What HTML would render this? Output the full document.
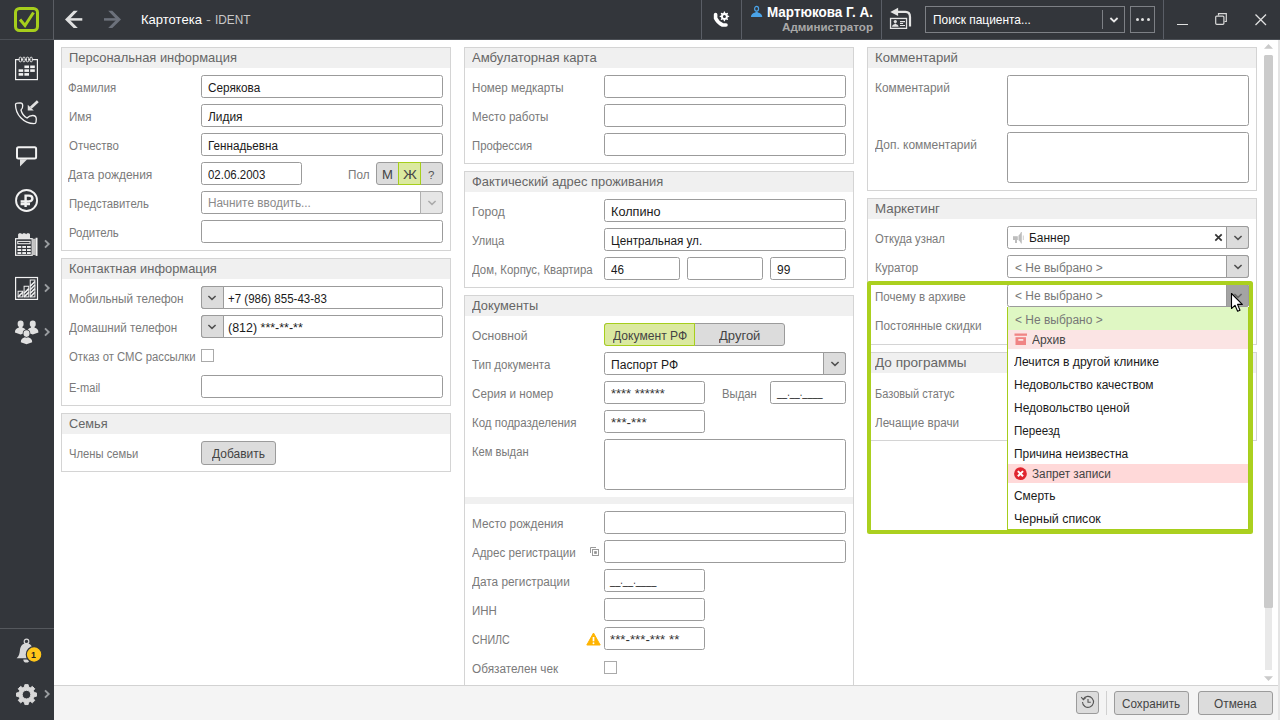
<!DOCTYPE html>
<html lang="ru"><head><meta charset="utf-8"><title>Картотека - IDENT</title>
<style>
html,body{margin:0;padding:0;}
body{width:1280px;height:720px;overflow:hidden;position:relative;background:#fff;font-family:'Liberation Sans',sans-serif;}
span{white-space:nowrap;display:block;}
svg{display:block;overflow:visible;}
</style></head>
<body>
<div style='position:absolute;left:0px;top:0px;width:1280px;height:40px;box-sizing:border-box;background:#33363b;'></div>
<div style='position:absolute;left:0px;top:40px;width:54px;height:680px;box-sizing:border-box;background:#33363b;'></div>
<div style='position:absolute;left:0px;top:39px;width:1280px;height:1px;box-sizing:border-box;background:#4b4f55;'></div>
<div style='position:absolute;left:53px;top:0px;width:1px;height:40px;box-sizing:border-box;background:#5a5d63;'></div>
<div style='position:absolute;left:701px;top:0px;width:1px;height:39px;box-sizing:border-box;background:#5a5e66;'></div>
<div style='position:absolute;left:741px;top:0px;width:1px;height:39px;box-sizing:border-box;background:#5a5e66;'></div>
<div style='position:absolute;left:881px;top:0px;width:1px;height:39px;box-sizing:border-box;background:#5a5e66;'></div>
<div style='position:absolute;left:1163px;top:0px;width:1px;height:39px;box-sizing:border-box;background:#5a5e66;'></div>
<div style='position:absolute;left:0px;top:628px;width:54px;height:1px;box-sizing:border-box;background:#55585d;'></div>
<svg style='position:absolute;left:12px;top:5px' width='30' height='30' viewBox='0 0 30 30'><rect x='3.5' y='3.5' width='22' height='22' rx='4' fill='none' stroke='#a6ce1c' stroke-width='3'/><path d='M8 14.5L13 20.5L21.5 7.5' fill='none' stroke='#a6ce1c' stroke-width='3'/></svg>
<svg style='position:absolute;left:63px;top:8px' width='22' height='22' viewBox='0 0 22 22'><path d='M10.700 2.700H14.800L6.400 11.400L14.800 20.100H10.700L2 11.400z' fill='#e0e0e0'/><path d='M5.500 11.400H19.300' stroke='#e0e0e0' stroke-width='2.500'/></svg>
<svg style='position:absolute;left:101px;top:8px' width='22' height='22' viewBox='0 0 22 22'><path d='M11.300 2.700H7.200L15.600 11.400L7.200 20.100H11.300L20 11.400z' fill='#6c717b'/><path d='M16.500 11.400H3' stroke='#6c717b' stroke-width='2.500'/></svg>
<svg style='position:absolute;left:700px;top:0px' width='40' height='40' viewBox='0 0 40 40'><path d='M15.6 14.6V18.2C17 21.2 19.6 23.6 22.6 25H26' fill='none' stroke='#fff' stroke-width='3.6' stroke-linecap='round' stroke-linejoin='round'/><path d='M29.18 15.95L29.18 16.85L27.78 17.32L27.44 18.13L28.10 19.46L27.46 20.10L26.13 19.44L25.32 19.78L24.85 21.18L23.95 21.18L23.48 19.78L22.67 19.44L21.34 20.10L20.70 19.46L21.36 18.13L21.02 17.32L19.62 16.85L19.62 15.95L21.02 15.48L21.36 14.67L20.70 13.34L21.34 12.70L22.67 13.36L23.48 13.02L23.95 11.62L24.85 11.62L25.32 13.02L26.13 13.36L27.46 12.70L28.10 13.34L27.44 14.67L27.78 15.48ZM25.9 16.4a1.5 1.5 0 1 0 -3.0 0a1.5 1.5 0 1 0 3.0 0Z' fill='#fff' fill-rule='evenodd'/></svg>
<svg style='position:absolute;left:750px;top:4px' width='14' height='14' viewBox='0 0 14 14'><ellipse cx='6.600' cy='4.750' rx='2' ry='2.350' fill='none' stroke='#4aa3e8' stroke-width='1.200'/><path d='M.9 13c.1-2.600 2-4.300 4.400-4.600l.6-1h1.400l.6 1c2.400.3 4.300 2 4.400 4.600z' fill='#4aa3e8'/></svg>
<svg style='position:absolute;left:880px;top:0px' width='40' height='40' viewBox='0 0 40 40'><path d='M10.300 11.900L18.100 7.800V15.900z' fill='#e4e4e4'/><path d='M18 11.900H25.500C28.500 11.900 30 14 30 17V26.500' fill='none' stroke='#e4e4e4' stroke-width='2.200'/><rect x='10.550' y='18.450' width='16' height='9.900' fill='none' stroke='#e4e4e4' stroke-width='1.300'/><circle cx='15.300' cy='21.500' r='1.600' fill='#e4e4e4'/><path d='M12 26.800c.2-1.500 1.200-2.300 2.500-2.500l.3-.8h1l.3.800c1.300.2 2.300 1 2.500 2.500z' fill='#e4e4e4'/><path d='M20 21.600H25M20 23.500H23.100M20 25.500H25' stroke='#e4e4e4' stroke-width='1.100'/></svg>
<div style='position:absolute;left:925px;top:6px;width:200px;height:27px;box-sizing:border-box;border:1px solid #7d8085;'></div>
<div style='position:absolute;left:1102px;top:10px;width:1px;height:19px;box-sizing:border-box;background:#7d8085;'></div>
<svg style='position:absolute;left:1108.5px;top:15.5px' width='10' height='8' viewBox='0 0 10 8'><path d='M1.4 2.0L5 5.4L8.6 2.0' fill='none' stroke='#e8e8e8' stroke-width='1.8'/></svg>
<div style='position:absolute;left:1130px;top:6px;width:25px;height:27px;box-sizing:border-box;border:1px solid #7d8085;'></div>
<div style='position:absolute;left:1135.5px;top:18px;width:3px;height:3px;box-sizing:border-box;background:#e0e0e0;border-radius:50%;'></div>
<div style='position:absolute;left:1141.0px;top:18px;width:3px;height:3px;box-sizing:border-box;background:#e0e0e0;border-radius:50%;'></div>
<div style='position:absolute;left:1146.5px;top:18px;width:3px;height:3px;box-sizing:border-box;background:#e0e0e0;border-radius:50%;'></div>
<div style='position:absolute;left:1177px;top:24px;width:11px;height:1.3px;box-sizing:border-box;background:#e0e0e0;'></div>
<svg style='position:absolute;left:1214px;top:12px' width='14' height='14' viewBox='0 0 14 14'><path d='M4.500 3.500V1.700H12.300V9.500H10.500' fill='none' stroke='#d8d8d8' stroke-width='1.2'/><rect x='1.700' y='4.100' width='8.200' height='8.200' rx='1' fill='none' stroke='#d8d8d8' stroke-width='1.2'/></svg>
<svg style='position:absolute;left:1254px;top:13px' width='14' height='14' viewBox='0 0 14 14'><path d='M1.500 1.500L12 12M12 1.500L1.500 12' fill='none' stroke='#e0e0e0' stroke-width='1.300'/></svg>
<svg style='position:absolute;left:14px;top:56px' width='26' height='26' viewBox='0 0 26 26'><rect x='1.600' y='3.600' width='21.800' height='20' fill='none' stroke='#f2f2f2' stroke-width='1.2'/><rect x='5.2' y='1.200' width='2.300' height='4.600' rx='1' fill='#33363b' stroke='#f2f2f2' stroke-width='0.9'/><rect x='8.8' y='1.200' width='2.300' height='4.600' rx='1' fill='#33363b' stroke='#f2f2f2' stroke-width='0.9'/><rect x='12.4' y='1.200' width='2.300' height='4.600' rx='1' fill='#33363b' stroke='#f2f2f2' stroke-width='0.9'/><rect x='16.0' y='1.200' width='2.300' height='4.600' rx='1' fill='#33363b' stroke='#f2f2f2' stroke-width='0.9'/><rect x='10.4' y='9.5' width='4.600' height='2.600' fill='#f2f2f2'/><rect x='16.2' y='9.5' width='4.600' height='2.600' fill='#f2f2f2'/><rect x='4.6' y='13.3' width='4.600' height='2.600' fill='#f2f2f2'/><rect x='10.4' y='13.3' width='4.600' height='2.600' fill='#f2f2f2'/><rect x='16.2' y='13.3' width='4.600' height='2.600' fill='#f2f2f2'/><rect x='4.6' y='17.1' width='4.600' height='2.600' fill='#f2f2f2'/><rect x='10.4' y='17.1' width='4.600' height='2.600' fill='#f2f2f2'/></svg>
<svg style='position:absolute;left:14px;top:100px' width='26' height='26' viewBox='0 0 26 26'><path d='M1.500 4.400C1.500 3.500 2.300 3.200 3.500 3.100L6.400 2.900C7.800 2.900 8.600 3.800 8.700 5.500C8.800 7.500 8.300 9 7 10C8 14 10.500 16.800 13 18C14.500 16.500 16.500 15.500 18.800 15.500C20.600 15.500 22.200 17 22.300 19L22 22.300C21.900 23.300 21.200 23.600 20 23.600C9.500 23.500 1.500 14.500 1.500 4.400Z' fill='none' stroke='#f2f2f2' stroke-width='1.300' stroke-linejoin='round'/><path d='M13.750 10.600V4.750L19.750 10.600z' fill='#e0e0e0'/><path d='M16.800 7.700L23.800 1.200' stroke='#e0e0e0' stroke-width='2.700'/></svg>
<svg style='position:absolute;left:14px;top:144px' width='26' height='26' viewBox='0 0 26 26'><rect x='3' y='3.250' width='19.100' height='11.200' rx='1.500' fill='none' stroke='#f2f2f2' stroke-width='2'/><path d='M6 15.200H13.250L6 22.500z' fill='#e0e0e0'/></svg>
<svg style='position:absolute;left:14px;top:188px' width='26' height='26' viewBox='0 0 26 26'><circle cx='12.550' cy='12.450' r='10.500' fill='none' stroke='#f2f2f2' stroke-width='1.900'/><path d='M11.600 19V7.600H15c2.400 0 3.400 1.400 3.400 2.900s-1 2.900-3.400 2.900H6.600M6.600 16H16' fill='none' stroke='#f2f2f2' stroke-width='2.400'/></svg>
<svg style='position:absolute;left:14px;top:232px' width='26' height='26' viewBox='0 0 26 26'><path d='M4.100 6.500V2.300l1-1.100h2l1 1.100 1-1.100h2l1 1.100 1-1.100h2l.9 1.100V6.500z' fill='#e4e4e4'/><rect x='1.600' y='6.700' width='16.600' height='16.600' fill='none' stroke='#f2f2f2' stroke-width='1.200'/><rect x='3.750' y='9.400' width='12.350' height='2.300' fill='none' stroke='#f2f2f2' stroke-width='1'/><rect x='3.5' y='14' width='3.750' height='1.900' fill='#f2f2f2'/><rect x='3.5' y='17.1' width='3.750' height='1.900' fill='#f2f2f2'/><rect x='3.5' y='20.1' width='3.750' height='1.900' fill='#f2f2f2'/><rect x='8.25' y='14' width='3.750' height='1.900' fill='#f2f2f2'/><rect x='8.25' y='17.1' width='3.750' height='1.900' fill='#f2f2f2'/><rect x='8.25' y='20.1' width='3.750' height='1.900' fill='#f2f2f2'/><rect x='13' y='14' width='3.750' height='1.900' fill='#f2f2f2'/><rect x='13' y='17.1' width='3.750' height='1.900' fill='#f2f2f2'/><rect x='13' y='20.1' width='3.750' height='1.900' fill='#f2f2f2'/><rect x='18.750' y='6.750' width='2.900' height='16.300' fill='#c2c2c2'/><rect x='21.600' y='5.750' width='1.900' height='18.150' fill='#f2f2f2'/></svg>
<svg style='position:absolute;left:14px;top:276px' width='26' height='26' viewBox='0 0 26 26'><rect x='1.600' y='1.500' width='21.900' height='21.900' fill='none' stroke='#f2f2f2' stroke-width='1.200'/><rect x='4.1' y='15.25' width='4.65' height='5.649999999999999' fill='none' stroke='#f2f2f2' stroke-width='1'/><path d='M4.1 20.9L8.75 16.25' stroke='#f2f2f2' stroke-width='1.500'/><rect x='10.1' y='10.25' width='4.65' height='10.649999999999999' fill='none' stroke='#f2f2f2' stroke-width='1'/><path d='M10.1 20.9L14.75 16.25M10.1 17.299999999999997L14.75 12.649999999999997' stroke='#f2f2f2' stroke-width='1.500'/><rect x='16.25' y='4' width='4.65' height='16.9' fill='none' stroke='#f2f2f2' stroke-width='1'/><path d='M16.25 20.9L20.9 16.25M16.25 17.299999999999997L20.9 12.649999999999997M16.25 13.699999999999998L20.9 9.049999999999997M16.25 10.099999999999998L20.9 5.4499999999999975' stroke='#f2f2f2' stroke-width='1.500'/></svg>
<svg style='position:absolute;left:13px;top:319px' width='28' height='28' viewBox='0 0 28 28'><path d='M1.8999999999999995 13.5c0-2.800 1.600-4.300 3.700-4.700l.6-1.200h2.800l.6 1.200c2.100.4 3.700 1.900 3.700 4.700l-5.700 2z' fill='#e0e0e0'/><ellipse cx='7.6' cy='4.9' rx='3.0' ry='3.3' fill='#e0e0e0'/><path d='M14.05 13.5c0-2.800 1.600-4.300 3.700-4.700l.6-1.200h2.800l.6 1.200c2.100.4 3.700 1.900 3.700 4.700l-5.700 2z' fill='#e0e0e0'/><ellipse cx='19.75' cy='4.9' rx='3.0' ry='3.3' fill='#e0e0e0'/><path d='M7.8 23.2c0-2.800 1.600-4.300 3.700-4.700l.6-1.200h2.800l.6 1.200c2.100.4 3.700 1.900 3.700 4.700l-5.700 2z' fill='#e0e0e0' stroke='#33363b' stroke-width='1.600' paint-order='stroke'/><ellipse cx='13.5' cy='14.6' rx='3.0' ry='3.3' fill='#e0e0e0' stroke='#33363b' stroke-width='1.600' paint-order='stroke'/></svg>
<svg style='position:absolute;left:14px;top:636px' width='30' height='28' viewBox='0 0 30 28'><circle cx='12.500' cy='5.400' r='2.300' fill='none' stroke='#d8d8d8' stroke-width='1.200'/><path d='M2.600 22.200c2.700-2.200 3-4.800 3.400-8.400.4-3.700 2.900-6.500 6.400-6.500s6 2.800 6.400 6.500c.4 3.600.7 6.200 3.400 8.400z' fill='#d8d8d8'/><path d='M9.300 23.500a3.100 3.100 0 0 0 6.200 0z' fill='#d8d8d8'/><circle cx='20.100' cy='18.500' r='7.800' fill='#ffc61a' stroke='#33363b' stroke-width='1.200'/></svg>
<svg style='position:absolute;left:14px;top:682px' width='26' height='26' viewBox='0 0 26 26'><path d='M22.46 10.94L22.46 14.26L20.14 14.62L19.33 16.57L20.72 18.47L18.37 20.82L16.47 19.43L14.52 20.24L14.16 22.56L10.84 22.56L10.48 20.24L8.53 19.43L6.63 20.82L4.28 18.47L5.67 16.57L4.86 14.62L2.54 14.26L2.54 10.94L4.86 10.58L5.67 8.63L4.28 6.73L6.63 4.38L8.53 5.77L10.48 4.96L10.84 2.64L14.16 2.64L14.52 4.96L16.47 5.77L18.37 4.38L20.72 6.73L19.33 8.63L20.14 10.58ZM16.8 12.6a4.3 4.3 0 1 0 -8.6 0a4.3 4.3 0 1 0 8.6 0Z' fill='#d8d8d8' fill-rule='evenodd' stroke='#d8d8d8' stroke-width='1' stroke-linejoin='round'/></svg>
<svg style='position:absolute;left:43px;top:239px' width='8' height='10' viewBox='0 0 8 10'><path d='M2 1.300L5.700 5L2 8.700' fill='none' stroke='#9a9da0' stroke-width='1.900'/></svg>
<svg style='position:absolute;left:43px;top:283px' width='8' height='10' viewBox='0 0 8 10'><path d='M2 1.300L5.700 5L2 8.700' fill='none' stroke='#9a9da0' stroke-width='1.900'/></svg>
<svg style='position:absolute;left:43px;top:327px' width='8' height='10' viewBox='0 0 8 10'><path d='M2 1.300L5.700 5L2 8.700' fill='none' stroke='#9a9da0' stroke-width='1.900'/></svg>
<svg style='position:absolute;left:43px;top:689px' width='8' height='10' viewBox='0 0 8 10'><path d='M2 1.300L5.700 5L2 8.700' fill='none' stroke='#9a9da0' stroke-width='1.900'/></svg>
<div style='position:absolute;left:54px;top:40px;width:1226px;height:645px;box-sizing:border-box;background:#fff;'></div>
<div style='position:absolute;left:61px;top:47px;width:390px;height:204px;box-sizing:border-box;border:1px solid #d4d4d4;background:#fff;'></div>
<div style='position:absolute;left:62px;top:48px;width:388px;height:20px;box-sizing:border-box;background:#f0f0f0;'></div>
<div style='position:absolute;left:201px;top:75px;width:242px;height:23px;box-sizing:border-box;border:1px solid #9b9b9b;border-radius:2.5px;background:#fff;'></div>
<div style='position:absolute;left:201px;top:104px;width:242px;height:23px;box-sizing:border-box;border:1px solid #9b9b9b;border-radius:2.5px;background:#fff;'></div>
<div style='position:absolute;left:201px;top:133px;width:242px;height:23px;box-sizing:border-box;border:1px solid #9b9b9b;border-radius:2.5px;background:#fff;'></div>
<div style='position:absolute;left:201px;top:162px;width:101px;height:23px;box-sizing:border-box;border:1px solid #9b9b9b;border-radius:2.5px;background:#fff;'></div>
<div style='position:absolute;left:376px;top:162px;width:67px;height:23px;box-sizing:border-box;border:1px solid #9b9b9b;border-radius:3px;background:#dcdcdc;'></div>
<div style='position:absolute;left:398px;top:162px;width:23px;height:23px;box-sizing:border-box;border:1px solid #a6ce1c;background:#dbe9a0;'></div>
<div style='position:absolute;left:201px;top:191px;width:242px;height:23px;box-sizing:border-box;border:1px solid #9b9b9b;border-radius:2.5px;background:#fff;'></div>
<div style='position:absolute;left:420px;top:191px;width:23px;height:23px;box-sizing:border-box;border:1px solid #b0b0b0;border-radius:0 3px 3px 0;background:#e6e6e6;'></div>
<svg style='position:absolute;left:426.5px;top:198.5px' width='10' height='8' viewBox='0 0 10 8'><path d='M1.4 2.0L5 5.4L8.6 2.0' fill='none' stroke='#aaa' stroke-width='1.5'/></svg>
<div style='position:absolute;left:201px;top:220px;width:242px;height:23px;box-sizing:border-box;border:1px solid #9b9b9b;border-radius:2.5px;background:#fff;'></div>
<div style='position:absolute;left:61px;top:258px;width:390px;height:148px;box-sizing:border-box;border:1px solid #d4d4d4;background:#fff;'></div>
<div style='position:absolute;left:62px;top:259px;width:388px;height:20px;box-sizing:border-box;background:#f0f0f0;'></div>
<div style='position:absolute;left:201px;top:286px;width:242px;height:23px;box-sizing:border-box;border:1px solid #9b9b9b;border-radius:2.5px;background:#fff;'></div>
<div style='position:absolute;left:201px;top:286px;width:23px;height:23px;box-sizing:border-box;border:1px solid #9b9b9b;border-radius:3px 0 0 3px;background:#dcdcdc;'></div>
<svg style='position:absolute;left:207px;top:293.5px' width='10' height='8' viewBox='0 0 10 8'><path d='M1.4 2.0L5 5.4L8.6 2.0' fill='none' stroke='#505050' stroke-width='1.5'/></svg>
<div style='position:absolute;left:201px;top:315px;width:242px;height:23px;box-sizing:border-box;border:1px solid #9b9b9b;border-radius:2.5px;background:#fff;'></div>
<div style='position:absolute;left:201px;top:315px;width:23px;height:23px;box-sizing:border-box;border:1px solid #9b9b9b;border-radius:3px 0 0 3px;background:#dcdcdc;'></div>
<svg style='position:absolute;left:207px;top:322.5px' width='10' height='8' viewBox='0 0 10 8'><path d='M1.4 2.0L5 5.4L8.6 2.0' fill='none' stroke='#505050' stroke-width='1.5'/></svg>
<div style='position:absolute;left:201px;top:349px;width:13px;height:13px;box-sizing:border-box;border:1px solid #aaa;background:#fff;'></div>
<div style='position:absolute;left:201px;top:375px;width:242px;height:23px;box-sizing:border-box;border:1px solid #9b9b9b;border-radius:2.5px;background:#fff;'></div>
<div style='position:absolute;left:61px;top:413px;width:390px;height:59px;box-sizing:border-box;border:1px solid #d4d4d4;background:#fff;'></div>
<div style='position:absolute;left:62px;top:414px;width:388px;height:20px;box-sizing:border-box;background:#f0f0f0;'></div>
<div style='position:absolute;left:201px;top:441px;width:75px;height:24px;box-sizing:border-box;border:1px solid #9b9b9b;border-radius:3px;background:#dcdcdc;'></div>
<div style='position:absolute;left:464px;top:47px;width:390px;height:117px;box-sizing:border-box;border:1px solid #d4d4d4;background:#fff;'></div>
<div style='position:absolute;left:465px;top:48px;width:388px;height:20px;box-sizing:border-box;background:#f0f0f0;'></div>
<div style='position:absolute;left:604px;top:75px;width:242px;height:23px;box-sizing:border-box;border:1px solid #9b9b9b;border-radius:2.5px;background:#fff;'></div>
<div style='position:absolute;left:604px;top:104px;width:242px;height:23px;box-sizing:border-box;border:1px solid #9b9b9b;border-radius:2.5px;background:#fff;'></div>
<div style='position:absolute;left:604px;top:133px;width:242px;height:23px;box-sizing:border-box;border:1px solid #9b9b9b;border-radius:2.5px;background:#fff;'></div>
<div style='position:absolute;left:464px;top:171px;width:390px;height:117px;box-sizing:border-box;border:1px solid #d4d4d4;background:#fff;'></div>
<div style='position:absolute;left:465px;top:172px;width:388px;height:20px;box-sizing:border-box;background:#f0f0f0;'></div>
<div style='position:absolute;left:604px;top:199px;width:242px;height:23px;box-sizing:border-box;border:1px solid #9b9b9b;border-radius:2.5px;background:#fff;'></div>
<div style='position:absolute;left:604px;top:228px;width:242px;height:23px;box-sizing:border-box;border:1px solid #9b9b9b;border-radius:2.5px;background:#fff;'></div>
<div style='position:absolute;left:604px;top:257px;width:76px;height:23px;box-sizing:border-box;border:1px solid #9b9b9b;border-radius:2.5px;background:#fff;'></div>
<div style='position:absolute;left:687px;top:257px;width:76px;height:23px;box-sizing:border-box;border:1px solid #9b9b9b;border-radius:2.5px;background:#fff;'></div>
<div style='position:absolute;left:770px;top:257px;width:76px;height:23px;box-sizing:border-box;border:1px solid #9b9b9b;border-radius:2.5px;background:#fff;'></div>
<div style='position:absolute;left:464px;top:295px;width:390px;height:400px;box-sizing:border-box;border:1px solid #d4d4d4;background:#fff;border-bottom:none;'></div>
<div style='position:absolute;left:465px;top:296px;width:388px;height:20px;box-sizing:border-box;background:#f0f0f0;'></div>
<div style='position:absolute;left:604px;top:323px;width:181px;height:23px;box-sizing:border-box;border:1px solid #9b9b9b;border-radius:3px;background:#dcdcdc;'></div>
<div style='position:absolute;left:604px;top:323px;width:91px;height:23px;box-sizing:border-box;border:1px solid #a6ce1c;border-radius:3px 0 0 3px;background:#dbe9a0;'></div>
<div style='position:absolute;left:604px;top:352px;width:242px;height:23px;box-sizing:border-box;border:1px solid #9b9b9b;border-radius:2.5px;background:#fff;'></div>
<div style='position:absolute;left:823px;top:352px;width:23px;height:23px;box-sizing:border-box;border:1px solid #9b9b9b;border-radius:0 3px 3px 0;background:#dcdcdc;'></div>
<svg style='position:absolute;left:829.5px;top:359.5px' width='10' height='8' viewBox='0 0 10 8'><path d='M1.4 2.0L5 5.4L8.6 2.0' fill='none' stroke='#505050' stroke-width='1.5'/></svg>
<div style='position:absolute;left:604px;top:381px;width:101px;height:23px;box-sizing:border-box;border:1px solid #9b9b9b;border-radius:2.5px;background:#fff;'></div>
<div style='position:absolute;left:770px;top:381px;width:76px;height:23px;box-sizing:border-box;border:1px solid #9b9b9b;border-radius:2.5px;background:#fff;'></div>
<div style='position:absolute;left:604px;top:410px;width:101px;height:23px;box-sizing:border-box;border:1px solid #9b9b9b;border-radius:2.5px;background:#fff;'></div>
<div style='position:absolute;left:604px;top:439px;width:242px;height:51px;box-sizing:border-box;border:1px solid #9b9b9b;border-radius:2.5px;background:#fff;'></div>
<div style='position:absolute;left:465px;top:497px;width:388px;height:7px;box-sizing:border-box;background:#f0f0f0;'></div>
<div style='position:absolute;left:604px;top:511px;width:242px;height:23px;box-sizing:border-box;border:1px solid #9b9b9b;border-radius:2.5px;background:#fff;'></div>
<div style='position:absolute;left:604px;top:540px;width:242px;height:23px;box-sizing:border-box;border:1px solid #9b9b9b;border-radius:2.5px;background:#fff;'></div>
<svg style='position:absolute;left:589px;top:546px' width='11' height='11' viewBox='0 0 11 11'><path d='M1.500 7V1.500H7' fill='none' stroke='#9a9a9a' stroke-width='1'/><rect x='3.500' y='3.500' width='6' height='6' fill='none' stroke='#9a9a9a' stroke-width='1'/><rect x='5.200' y='5.200' width='2.600' height='2.600' fill='#8c8c8c'/></svg>
<div style='position:absolute;left:604px;top:569px;width:101px;height:23px;box-sizing:border-box;border:1px solid #9b9b9b;border-radius:2.5px;background:#fff;'></div>
<div style='position:absolute;left:604px;top:598px;width:101px;height:23px;box-sizing:border-box;border:1px solid #9b9b9b;border-radius:2.5px;background:#fff;'></div>
<div style='position:absolute;left:604px;top:627px;width:101px;height:23px;box-sizing:border-box;border:1px solid #9b9b9b;border-radius:2.5px;background:#fff;'></div>
<svg style='position:absolute;left:586px;top:632px' width='15' height='14' viewBox='0 0 15 14'><path d='M7.500 1L14.200 13H.8z' fill='#ffb400' stroke='#ffb400' stroke-width='1' stroke-linejoin='round'/><path d='M7.500 5V9.300' stroke='#fff' stroke-width='1.700'/><circle cx='7.500' cy='11.200' r='.95' fill='#fff'/></svg>
<div style='position:absolute;left:604px;top:661px;width:13px;height:13px;box-sizing:border-box;border:1px solid #aaa;background:#fff;'></div>
<div style='position:absolute;left:867px;top:47px;width:390px;height:144px;box-sizing:border-box;border:1px solid #d4d4d4;background:#fff;'></div>
<div style='position:absolute;left:868px;top:48px;width:388px;height:20px;box-sizing:border-box;background:#f0f0f0;'></div>
<div style='position:absolute;left:1007px;top:75px;width:242px;height:51px;box-sizing:border-box;border:1px solid #9b9b9b;border-radius:2.5px;background:#fff;'></div>
<div style='position:absolute;left:1007px;top:132px;width:242px;height:51px;box-sizing:border-box;border:1px solid #9b9b9b;border-radius:2.5px;background:#fff;'></div>
<div style='position:absolute;left:867px;top:198px;width:390px;height:147px;box-sizing:border-box;border:1px solid #d4d4d4;background:#fff;'></div>
<div style='position:absolute;left:868px;top:199px;width:388px;height:20px;box-sizing:border-box;background:#f0f0f0;'></div>
<div style='position:absolute;left:1007px;top:226px;width:242px;height:23px;box-sizing:border-box;border:1px solid #9b9b9b;border-radius:2.5px;background:#fff;'></div>
<div style='position:absolute;left:1226px;top:226px;width:23px;height:23px;box-sizing:border-box;border:1px solid #9b9b9b;border-radius:0 3px 3px 0;background:#dcdcdc;'></div>
<svg style='position:absolute;left:1232.5px;top:233.5px' width='10' height='8' viewBox='0 0 10 8'><path d='M1.4 2.0L5 5.4L8.6 2.0' fill='none' stroke='#505050' stroke-width='1.5'/></svg>
<svg style='position:absolute;left:1013px;top:232px' width='12' height='12' viewBox='0 0 12 12'><path d='M0 4.200H4.800V8H0z' fill='#bdbdbd'/><path d='M2 8V11H4V8z' fill='#bdbdbd'/><path d='M5.500 3.500C6.500 2.800 7.500 1.500 8 0H8.800V11.500H8C7.500 10 6.500 8.900 5.500 8.300z' fill='#bdbdbd'/><path d='M10.300 3.500V8' stroke='#cfcfcf' stroke-width='1'/></svg>
<svg style='position:absolute;left:1214px;top:233px' width='9' height='9' viewBox='0 0 9 9'><path d='M1.300 1.300L7.700 7.700M7.700 1.300L1.300 7.700' stroke='#333' stroke-width='1.700'/></svg>
<div style='position:absolute;left:1007px;top:255px;width:242px;height:23px;box-sizing:border-box;border:1px solid #9b9b9b;border-radius:2.5px;background:#fff;'></div>
<div style='position:absolute;left:1226px;top:255px;width:23px;height:23px;box-sizing:border-box;border:1px solid #9b9b9b;border-radius:0 3px 3px 0;background:#dcdcdc;'></div>
<svg style='position:absolute;left:1232.5px;top:262.5px' width='10' height='8' viewBox='0 0 10 8'><path d='M1.4 2.0L5 5.4L8.6 2.0' fill='none' stroke='#505050' stroke-width='1.5'/></svg>
<div style='position:absolute;left:1007px;top:284px;width:242px;height:23px;box-sizing:border-box;border:1px solid #9b9b9b;border-radius:2.5px;background:#fff;'></div>
<div style='position:absolute;left:1226px;top:284px;width:23px;height:23px;box-sizing:border-box;border:1px solid #9b9b9b;border-radius:0 3px 3px 0;background:#a4a4a4;'></div>
<svg style='position:absolute;left:1232.5px;top:291.5px' width='10' height='8' viewBox='0 0 10 8'><path d='M1.4 2.0L5 5.4L8.6 2.0' fill='none' stroke='#666' stroke-width='1.5'/></svg>
<div style='position:absolute;left:867px;top:352px;width:390px;height:89px;box-sizing:border-box;border:1px solid #d4d4d4;background:#fff;'></div>
<div style='position:absolute;left:868px;top:353px;width:388px;height:20px;box-sizing:border-box;background:#f0f0f0;'></div>
<div style='position:absolute;left:1007px;top:307px;width:242px;height:223px;box-sizing:border-box;border:1px solid #a6ce1c;background:#fff;'></div>
<div style='position:absolute;left:1008px;top:307px;width:240px;height:23px;box-sizing:border-box;background:#dff7c3;'></div>
<div style='position:absolute;left:1008px;top:330px;width:240px;height:19px;box-sizing:border-box;background:#fbe4e4;'></div>
<div style='position:absolute;left:1008px;top:464px;width:240px;height:19px;box-sizing:border-box;background:#ffd9d9;'></div>
<svg style='position:absolute;left:1014px;top:333px' width='14' height='13' viewBox='0 0 14 13'><rect x='.5' y='.5' width='12.500' height='2.300' fill='#f08484'/><path d='M1.500 4.200H12V12H1.500z' fill='#f08484'/><rect x='4.300' y='6' width='5' height='1.800' fill='#fbe4e4'/></svg>
<svg style='position:absolute;left:1013px;top:466px' width='15' height='15' viewBox='0 0 15 15'><circle cx='7.450' cy='7.700' r='6.400' fill='#e0252f'/><path d='M4.850 5.100L10.050 10.300M10.050 5.100L4.850 10.300' stroke='#fff' stroke-width='2'/></svg>
<div style='position:absolute;left:867px;top:281px;width:386px;height:253px;box-sizing:border-box;border:4px solid #abd01f;border-radius:2.5px;'></div>
<svg style='position:absolute;left:1230px;top:292px' width='14' height='21' viewBox='0 0 14 21'><path d='M1.500 1.500V16.500L5 13.300L7.600 19.300L10 18.300L7.500 12.400H12.300z' fill='#fff' stroke='#000' stroke-width='1.100' stroke-linejoin='round'/></svg>
<div style='position:absolute;left:1265px;top:55px;width:7px;height:615px;box-sizing:border-box;background:#e9e9e9;'></div>
<div style='position:absolute;left:1264px;top:55px;width:9px;height:553px;box-sizing:border-box;background:#cbcbcb;border-radius:1.5px;'></div>
<svg style='position:absolute;left:1264px;top:44px' width='9' height='5' viewBox='0 0 9 5'><path d='M0 4.800L4.500 0L9 4.800z' fill='#cacaca'/></svg>
<svg style='position:absolute;left:1264px;top:676px' width='9' height='5' viewBox='0 0 9 5'><path d='M0 .2L4.500 5L9 .2z' fill='#cacaca'/></svg>
<div style='position:absolute;left:54px;top:685px;width:1226px;height:35px;box-sizing:border-box;background:#f4f4f4;border-top:1px solid #d2d2d2;'></div>
<div style='position:absolute;left:1076px;top:691px;width:23px;height:23px;box-sizing:border-box;border:1px solid #9b9b9b;border-radius:3px;background:#dcdcdc;'></div>
<svg style='position:absolute;left:1080px;top:694px' width='16' height='16' viewBox='0 0 16 16'><path d='M3.200 5.200A5.500 5.500 0 1 1 2.500 8' fill='none' stroke='#555' stroke-width='1.100'/><path d='M1.200 3.200L3.400 5.800L5.800 3.600' fill='none' stroke='#555' stroke-width='1.100'/><path d='M8 5V8.300H10.800' fill='none' stroke='#555' stroke-width='1.100'/></svg>
<div style='position:absolute;left:1106px;top:691px;width:1px;height:24px;box-sizing:border-box;background:#d0d0d0;'></div>
<div style='position:absolute;left:1114px;top:691px;width:75px;height:24px;box-sizing:border-box;border:1px solid #9b9b9b;border-radius:3px;background:#dcdcdc;'></div>
<div style='position:absolute;left:1198px;top:691px;width:75px;height:24px;box-sizing:border-box;border:1px solid #9b9b9b;border-radius:3px;background:#dcdcdc;'></div>
<div style='position:absolute;left:1278px;top:40px;width:2px;height:680px;box-sizing:border-box;background:#e4e4e4;'></div>
<span style="position:absolute;left:141.00px;top:12.00px;line-height:15px;font-size:13px;font-weight:400;color:#ffffff;transform:scaleX(1.0025);transform-origin:0 0;">Картотека</span>
<span style="position:absolute;left:206.40px;top:12.00px;line-height:15px;font-size:13px;font-weight:400;color:#b0b0b0;transform:scaleX(1.1281);transform-origin:0 0;">-</span>
<span style="position:absolute;left:215.20px;top:12.00px;line-height:15px;font-size:13px;font-weight:400;color:#c8c8c8;transform:scaleX(0.9103);transform-origin:0 0;">IDENT</span>
<span style="position:absolute;left:766.70px;top:4.00px;line-height:16px;font-size:14px;font-weight:700;color:#ffffff;transform:scaleX(0.9605);transform-origin:0 0;">Мартюкова Г. А.</span>
<span style="position:absolute;left:781.60px;top:21.00px;line-height:12px;font-size:11px;font-weight:700;color:#a8a8a8;transform:scaleX(1.0549);transform-origin:0 0;">Администратор</span>
<span style="position:absolute;left:932.60px;top:12.00px;line-height:15px;font-size:13px;font-weight:400;color:#ffffff;transform:scaleX(0.9158);transform-origin:0 0;">Поиск пациента...</span>
<span style="position:absolute;left:31.40px;top:650.00px;line-height:10px;font-size:9px;font-weight:700;color:#222;transform:scaleX(0.9769);transform-origin:0 0;">1</span>
<span style="position:absolute;left:68.70px;top:50.00px;line-height:15px;font-size:13px;font-weight:400;color:#666;transform:scaleX(0.9933);transform-origin:0 0;">Персональная информация</span>
<span style="position:absolute;left:68.00px;top:81.00px;line-height:14px;font-size:12px;font-weight:400;color:#7a7a7a;transform:scaleX(0.9440);transform-origin:0 0;">Фамилия</span>
<span style="position:absolute;left:207.60px;top:81.00px;line-height:14px;font-size:12px;font-weight:400;color:#1a1a1a;transform:scaleX(0.9783);transform-origin:0 0;">Серякова</span>
<span style="position:absolute;left:68.60px;top:110.00px;line-height:14px;font-size:12px;font-weight:400;color:#7a7a7a;transform:scaleX(0.9626);transform-origin:0 0;">Имя</span>
<span style="position:absolute;left:207.60px;top:110.00px;line-height:14px;font-size:12px;font-weight:400;color:#1a1a1a;transform:scaleX(0.9919);transform-origin:0 0;">Лидия</span>
<span style="position:absolute;left:68.90px;top:139.00px;line-height:14px;font-size:12px;font-weight:400;color:#7a7a7a;transform:scaleX(0.9565);transform-origin:0 0;">Отчество</span>
<span style="position:absolute;left:207.60px;top:139.00px;line-height:14px;font-size:12px;font-weight:400;color:#1a1a1a;transform:scaleX(0.9721);transform-origin:0 0;">Геннадьевна</span>
<span style="position:absolute;left:68.00px;top:168.00px;line-height:14px;font-size:12px;font-weight:400;color:#7a7a7a;transform:scaleX(0.9958);transform-origin:0 0;">Дата рождения</span>
<span style="position:absolute;left:207.60px;top:168.00px;line-height:14px;font-size:12px;font-weight:400;color:#1a1a1a;transform:scaleX(0.9540);transform-origin:0 0;">02.06.2003</span>
<span style="position:absolute;left:347.60px;top:168.00px;line-height:14px;font-size:12px;font-weight:400;color:#7a7a7a;transform:scaleX(0.9752);transform-origin:0 0;">Пол</span>
<span style="position:absolute;left:381.70px;top:167.00px;line-height:15px;font-size:13px;font-weight:400;color:#444;transform:scaleX(1.0052);transform-origin:0 0;">М</span>
<span style="position:absolute;left:402.60px;top:167.00px;line-height:15px;font-size:13px;font-weight:400;color:#484848;transform:scaleX(1.1568);transform-origin:0 0;">Ж</span>
<span style="position:absolute;left:428.40px;top:169.00px;line-height:12px;font-size:11px;font-weight:400;color:#555;transform:scaleX(1.0449);transform-origin:0 0;">?</span>
<span style="position:absolute;left:68.80px;top:197.00px;line-height:14px;font-size:12px;font-weight:400;color:#7a7a7a;transform:scaleX(0.9419);transform-origin:0 0;">Представитель</span>
<span style="position:absolute;left:207.60px;top:196.00px;line-height:14px;font-size:12px;font-weight:400;color:#8a8a8a;transform:scaleX(0.9845);transform-origin:0 0;">Начните вводить...</span>
<span style="position:absolute;left:68.80px;top:226.00px;line-height:14px;font-size:12px;font-weight:400;color:#7a7a7a;transform:scaleX(0.9489);transform-origin:0 0;">Родитель</span>
<span style="position:absolute;left:68.70px;top:261.00px;line-height:15px;font-size:13px;font-weight:400;color:#666;transform:scaleX(0.9894);transform-origin:0 0;">Контактная информация</span>
<span style="position:absolute;left:68.70px;top:292.00px;line-height:14px;font-size:12px;font-weight:400;color:#7a7a7a;transform:scaleX(0.9760);transform-origin:0 0;">Мобильный телефон</span>
<span style="position:absolute;left:227.70px;top:292.00px;line-height:14px;font-size:12px;font-weight:400;color:#1a1a1a;transform:scaleX(0.9585);transform-origin:0 0;">+7 (986) 855-43-83</span>
<span style="position:absolute;left:68.80px;top:321.00px;line-height:14px;font-size:12px;font-weight:400;color:#7a7a7a;transform:scaleX(0.9718);transform-origin:0 0;">Домашний телефон</span>
<span style="position:absolute;left:227.70px;top:321.00px;line-height:14px;font-size:12px;font-weight:400;color:#1a1a1a;transform:scaleX(1.0384);transform-origin:0 0;">(812) ***-**-**</span>
<span style="position:absolute;left:68.70px;top:350.00px;line-height:14px;font-size:12px;font-weight:400;color:#7a7a7a;transform:scaleX(0.9418);transform-origin:0 0;">Отказ от СМС рассылки</span>
<span style="position:absolute;left:68.70px;top:381.00px;line-height:14px;font-size:12px;font-weight:400;color:#7a7a7a;transform:scaleX(0.9202);transform-origin:0 0;">E-mail</span>
<span style="position:absolute;left:68.70px;top:416.00px;line-height:15px;font-size:13px;font-weight:400;color:#666;transform:scaleX(0.9803);transform-origin:0 0;">Семья</span>
<span style="position:absolute;left:68.70px;top:447.00px;line-height:14px;font-size:12px;font-weight:400;color:#7a7a7a;transform:scaleX(0.9347);transform-origin:0 0;">Члены семьи</span>
<span style="position:absolute;left:212.20px;top:446.00px;line-height:15px;font-size:13px;font-weight:400;color:#444;transform:scaleX(0.9208);transform-origin:0 0;">Добавить</span>
<span style="position:absolute;left:471.70px;top:50.00px;line-height:15px;font-size:13px;font-weight:400;color:#666;transform:scaleX(1.0065);transform-origin:0 0;">Амбулаторная карта</span>
<span style="position:absolute;left:471.70px;top:81.00px;line-height:14px;font-size:12px;font-weight:400;color:#7a7a7a;transform:scaleX(0.9677);transform-origin:0 0;">Номер медкарты</span>
<span style="position:absolute;left:471.70px;top:110.00px;line-height:14px;font-size:12px;font-weight:400;color:#7a7a7a;transform:scaleX(0.9666);transform-origin:0 0;">Место работы</span>
<span style="position:absolute;left:471.70px;top:139.00px;line-height:14px;font-size:12px;font-weight:400;color:#7a7a7a;transform:scaleX(0.9430);transform-origin:0 0;">Профессия</span>
<span style="position:absolute;left:471.70px;top:174.00px;line-height:15px;font-size:13px;font-weight:400;color:#666;transform:scaleX(0.9924);transform-origin:0 0;">Фактический адрес проживания</span>
<span style="position:absolute;left:471.70px;top:205.00px;line-height:14px;font-size:12px;font-weight:400;color:#7a7a7a;transform:scaleX(1.0102);transform-origin:0 0;">Город</span>
<span style="position:absolute;left:610.60px;top:205.00px;line-height:14px;font-size:12px;font-weight:400;color:#1a1a1a;transform:scaleX(1.0553);transform-origin:0 0;">Колпино</span>
<span style="position:absolute;left:471.70px;top:234.00px;line-height:14px;font-size:12px;font-weight:400;color:#7a7a7a;transform:scaleX(0.9508);transform-origin:0 0;">Улица</span>
<span style="position:absolute;left:610.60px;top:234.00px;line-height:14px;font-size:12px;font-weight:400;color:#1a1a1a;transform:scaleX(0.9756);transform-origin:0 0;">Центральная ул.</span>
<span style="position:absolute;left:471.70px;top:263.00px;line-height:14px;font-size:12px;font-weight:400;color:#7a7a7a;transform:scaleX(0.9489);transform-origin:0 0;">Дом, Корпус, Квартира</span>
<span style="position:absolute;left:610.60px;top:263.00px;line-height:14px;font-size:12px;font-weight:400;color:#1a1a1a;transform:scaleX(0.9731);transform-origin:0 0;">46</span>
<span style="position:absolute;left:777.20px;top:263.00px;line-height:14px;font-size:12px;font-weight:400;color:#1a1a1a;transform:scaleX(0.9956);transform-origin:0 0;">99</span>
<span style="position:absolute;left:471.70px;top:298.00px;line-height:15px;font-size:13px;font-weight:400;color:#666;transform:scaleX(0.9863);transform-origin:0 0;">Документы</span>
<span style="position:absolute;left:471.70px;top:329.00px;line-height:14px;font-size:12px;font-weight:400;color:#7a7a7a;transform:scaleX(1.0088);transform-origin:0 0;">Основной</span>
<span style="position:absolute;left:612.50px;top:328.00px;line-height:15px;font-size:13px;font-weight:400;color:#444;transform:scaleX(0.9310);transform-origin:0 0;">Документ РФ</span>
<span style="position:absolute;left:718.90px;top:328.00px;line-height:15px;font-size:13px;font-weight:400;color:#444;transform:scaleX(1.0014);transform-origin:0 0;">Другой</span>
<span style="position:absolute;left:471.70px;top:358.00px;line-height:14px;font-size:12px;font-weight:400;color:#7a7a7a;transform:scaleX(0.9577);transform-origin:0 0;">Тип документа</span>
<span style="position:absolute;left:610.60px;top:358.00px;line-height:14px;font-size:12px;font-weight:400;color:#1a1a1a;transform:scaleX(1.0074);transform-origin:0 0;">Паспорт РФ</span>
<span style="position:absolute;left:471.70px;top:387.00px;line-height:14px;font-size:12px;font-weight:400;color:#7a7a7a;transform:scaleX(0.9726);transform-origin:0 0;">Серия и номер</span>
<span style="position:absolute;left:610.60px;top:387.00px;line-height:14px;font-size:12px;font-weight:400;color:#333;transform:scaleX(1.0770);transform-origin:0 0;">**** ******</span>
<span style="position:absolute;left:721.50px;top:387.00px;line-height:14px;font-size:12px;font-weight:400;color:#7a7a7a;transform:scaleX(0.9421);transform-origin:0 0;">Выдан</span>
<span style="position:absolute;left:776.70px;top:385.00px;line-height:14px;font-size:12px;font-weight:400;color:#333;transform:scaleX(0.7592);transform-origin:0 0;">__.__.____</span>
<span style="position:absolute;left:471.70px;top:416.00px;line-height:14px;font-size:12px;font-weight:400;color:#7a7a7a;transform:scaleX(0.9588);transform-origin:0 0;">Код подразделения</span>
<span style="position:absolute;left:610.60px;top:416.00px;line-height:14px;font-size:12px;font-weight:400;color:#333;transform:scaleX(1.1151);transform-origin:0 0;">***-***</span>
<span style="position:absolute;left:471.70px;top:445.00px;line-height:14px;font-size:12px;font-weight:400;color:#7a7a7a;transform:scaleX(0.9346);transform-origin:0 0;">Кем выдан</span>
<span style="position:absolute;left:471.70px;top:517.00px;line-height:14px;font-size:12px;font-weight:400;color:#7a7a7a;transform:scaleX(0.9847);transform-origin:0 0;">Место рождения</span>
<span style="position:absolute;left:471.70px;top:546.00px;line-height:14px;font-size:12px;font-weight:400;color:#7a7a7a;transform:scaleX(0.9678);transform-origin:0 0;">Адрес регистрации</span>
<span style="position:absolute;left:471.70px;top:575.00px;line-height:14px;font-size:12px;font-weight:400;color:#7a7a7a;transform:scaleX(0.9832);transform-origin:0 0;">Дата регистрации</span>
<span style="position:absolute;left:610.20px;top:573.00px;line-height:14px;font-size:12px;font-weight:400;color:#333;transform:scaleX(0.7709);transform-origin:0 0;">__.__.____</span>
<span style="position:absolute;left:471.70px;top:604.00px;line-height:14px;font-size:12px;font-weight:400;color:#7a7a7a;transform:scaleX(0.9550);transform-origin:0 0;">ИНН</span>
<span style="position:absolute;left:471.70px;top:633.00px;line-height:14px;font-size:12px;font-weight:400;color:#7a7a7a;transform:scaleX(0.8894);transform-origin:0 0;">СНИЛС</span>
<span style="position:absolute;left:610.20px;top:633.00px;line-height:14px;font-size:12px;font-weight:400;color:#333;transform:scaleX(1.1052);transform-origin:0 0;">***-***-*** **</span>
<span style="position:absolute;left:471.70px;top:662.00px;line-height:14px;font-size:12px;font-weight:400;color:#7a7a7a;transform:scaleX(0.9805);transform-origin:0 0;">Обязателен чек</span>
<span style="position:absolute;left:874.70px;top:50.00px;line-height:15px;font-size:13px;font-weight:400;color:#666;transform:scaleX(1.0135);transform-origin:0 0;">Комментарий</span>
<span style="position:absolute;left:874.60px;top:81.00px;line-height:14px;font-size:12px;font-weight:400;color:#7a7a7a;transform:scaleX(0.9895);transform-origin:0 0;">Комментарий</span>
<span style="position:absolute;left:874.60px;top:138.00px;line-height:14px;font-size:12px;font-weight:400;color:#7a7a7a;transform:scaleX(0.9983);transform-origin:0 0;">Доп. комментарий</span>
<span style="position:absolute;left:874.70px;top:201.00px;line-height:15px;font-size:13px;font-weight:400;color:#666;transform:scaleX(1.0266);transform-origin:0 0;">Маркетинг</span>
<span style="position:absolute;left:874.60px;top:232.00px;line-height:14px;font-size:12px;font-weight:400;color:#7a7a7a;transform:scaleX(0.9365);transform-origin:0 0;">Откуда узнал</span>
<span style="position:absolute;left:1028.60px;top:231.00px;line-height:14px;font-size:12px;font-weight:400;color:#1a1a1a;transform:scaleX(0.9938);transform-origin:0 0;">Баннер</span>
<span style="position:absolute;left:874.60px;top:261.00px;line-height:14px;font-size:12px;font-weight:400;color:#7a7a7a;transform:scaleX(0.9674);transform-origin:0 0;">Куратор</span>
<span style="position:absolute;left:1015.00px;top:261.00px;line-height:14px;font-size:12px;font-weight:400;color:#777;transform:scaleX(0.9978);transform-origin:0 0;">&lt; Не выбрано &gt;</span>
<span style="position:absolute;left:874.60px;top:290.00px;line-height:14px;font-size:12px;font-weight:400;color:#7a7a7a;transform:scaleX(0.9627);transform-origin:0 0;">Почему в архиве</span>
<span style="position:absolute;left:1015.00px;top:289.00px;line-height:14px;font-size:12px;font-weight:400;color:#777;transform:scaleX(0.9978);transform-origin:0 0;">&lt; Не выбрано &gt;</span>
<span style="position:absolute;left:874.60px;top:319.00px;line-height:14px;font-size:12px;font-weight:400;color:#7a7a7a;transform:scaleX(0.9803);transform-origin:0 0;">Постоянные скидки</span>
<span style="position:absolute;left:874.70px;top:355.00px;line-height:15px;font-size:13px;font-weight:400;color:#666;transform:scaleX(1.0431);transform-origin:0 0;">До программы</span>
<span style="position:absolute;left:874.60px;top:387.00px;line-height:14px;font-size:12px;font-weight:400;color:#7a7a7a;transform:scaleX(0.9174);transform-origin:0 0;">Базовый статус</span>
<span style="position:absolute;left:874.60px;top:416.00px;line-height:14px;font-size:12px;font-weight:400;color:#7a7a7a;transform:scaleX(0.9770);transform-origin:0 0;">Лечащие врачи</span>
<span style="position:absolute;left:1015.00px;top:313.00px;line-height:14px;font-size:12px;font-weight:400;color:#777;transform:scaleX(0.9978);transform-origin:0 0;">&lt; Не выбрано &gt;</span>
<span style="position:absolute;left:1031.60px;top:333.00px;line-height:14px;font-size:12px;font-weight:400;color:#444;transform:scaleX(1.0022);transform-origin:0 0;">Архив</span>
<span style="position:absolute;left:1013.70px;top:355.00px;line-height:14px;font-size:12px;font-weight:400;color:#1a1a1a;transform:scaleX(1.0143);transform-origin:0 0;">Лечится в другой клинике</span>
<span style="position:absolute;left:1013.70px;top:378.00px;line-height:14px;font-size:12px;font-weight:400;color:#1a1a1a;transform:scaleX(0.9977);transform-origin:0 0;">Недовольство качеством</span>
<span style="position:absolute;left:1013.70px;top:401.00px;line-height:14px;font-size:12px;font-weight:400;color:#1a1a1a;transform:scaleX(0.9980);transform-origin:0 0;">Недовольство ценой</span>
<span style="position:absolute;left:1013.70px;top:424.00px;line-height:14px;font-size:12px;font-weight:400;color:#1a1a1a;transform:scaleX(0.9705);transform-origin:0 0;">Переезд</span>
<span style="position:absolute;left:1013.70px;top:447.00px;line-height:14px;font-size:12px;font-weight:400;color:#1a1a1a;transform:scaleX(0.9938);transform-origin:0 0;">Причина неизвестна</span>
<span style="position:absolute;left:1032.30px;top:467.00px;line-height:14px;font-size:12px;font-weight:400;color:#444;transform:scaleX(0.9803);transform-origin:0 0;">Запрет записи</span>
<span style="position:absolute;left:1013.70px;top:489.00px;line-height:14px;font-size:12px;font-weight:400;color:#1a1a1a;transform:scaleX(0.9916);transform-origin:0 0;">Смерть</span>
<span style="position:absolute;left:1013.70px;top:512.00px;line-height:14px;font-size:12px;font-weight:400;color:#1a1a1a;transform:scaleX(1.0345);transform-origin:0 0;">Черный список</span>
<span style="position:absolute;left:1122.20px;top:696.00px;line-height:15px;font-size:13px;font-weight:400;color:#444;transform:scaleX(0.8993);transform-origin:0 0;">Сохранить</span>
<span style="position:absolute;left:1213.90px;top:696.00px;line-height:15px;font-size:13px;font-weight:400;color:#444;transform:scaleX(0.9131);transform-origin:0 0;">Отмена</span>
</body></html>
